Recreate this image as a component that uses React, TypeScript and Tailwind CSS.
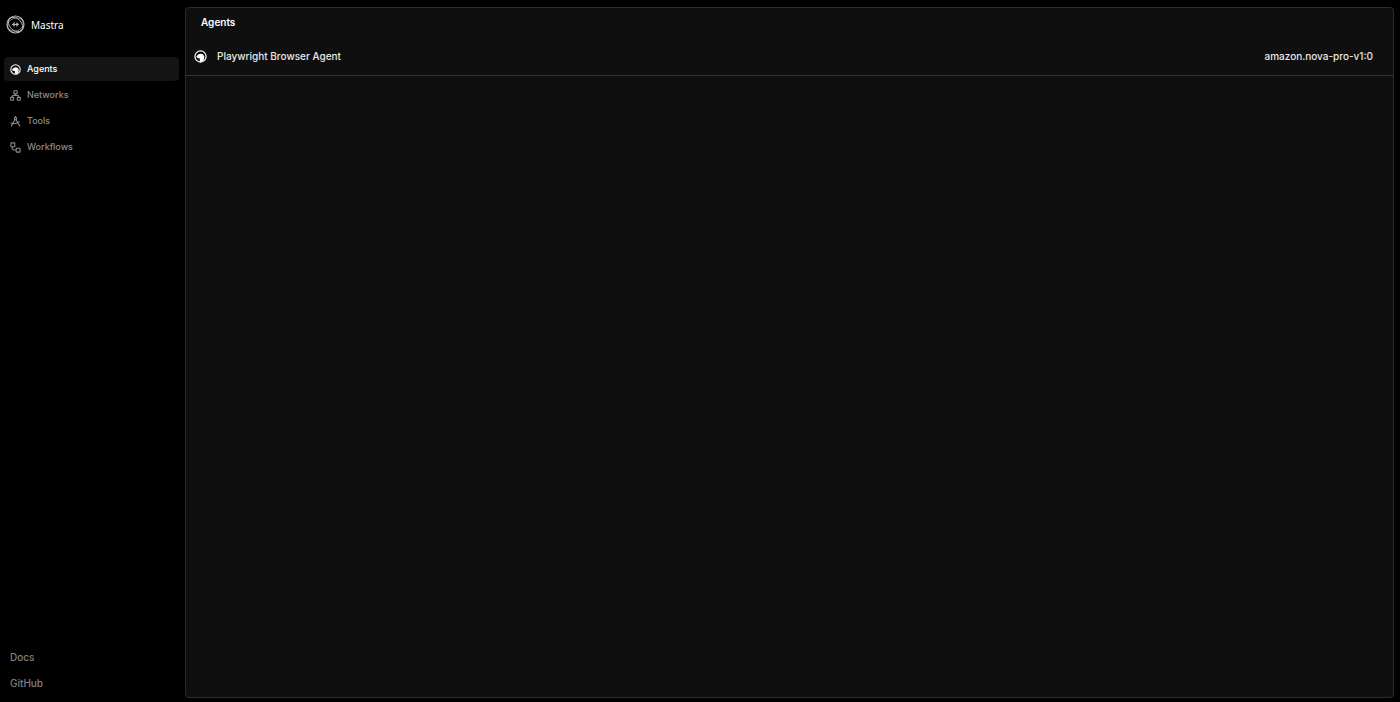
import type { ReactNode } from "react";

const AgentIcon = ({ className }: { className?: string }) => (
  <svg viewBox="0 0 24 24" fill="none" className={className} aria-hidden="true">
    <circle cx="12" cy="12" r="10.3" stroke="currentColor" strokeWidth="2.2" />
    <path
      d="M4 13 7.5 8.5 12 7l4.500 1L19 12l-.5 5-2.500 4-4.500 1-1-3.500.5-3L8 15Z"
      fill="currentColor"
    />
  </svg>
);

const NetworkIcon = ({ className }: { className?: string }) => (
  <svg viewBox="0 0 24 24" fill="none" stroke="currentColor" strokeWidth="2.4" className={className} aria-hidden="true">
    <rect x="8.5" y="1.5" width="7" height="7" rx="1" />
    <rect x="1.5" y="16" width="6.5" height="6.5" rx="1" />
    <rect x="16" y="16" width="6.5" height="6.5" rx="1" />
    <path d="M12 8.5V12M4.8 16v-2.5L6.5 12h11l1.700 1.500V16" />
  </svg>
);

const ToolsIcon = ({ className }: { className?: string }) => (
  <svg viewBox="0 0 24 24" fill="none" stroke="currentColor" strokeWidth="2.4" strokeLinecap="round" className={className} aria-hidden="true">
    <circle cx="12" cy="5.5" r="2.5" />
    <path d="M12 1v2M10.8 8 3 21.5M13.2 8 21 21.5M2 15.5c6 2.5 12 1.5 18-3" />
  </svg>
);

const WorkflowIcon = ({ className }: { className?: string }) => (
  <svg viewBox="0 0 24 24" fill="none" stroke="currentColor" strokeWidth="2.4" className={className} aria-hidden="true">
    <rect x="2" y="2" width="8.5" height="8.5" rx="1" />
    <rect x="13.5" y="13.5" width="8.5" height="8.5" rx="1" />
    <path d="M5 10.5V15l2.5 2.5h6" />
  </svg>
);

const MastraLogo = ({ className }: { className?: string }) => (
  <svg viewBox="0 0 34 34" fill="none" stroke="currentColor" className={className} aria-hidden="true">
    <circle cx="17" cy="17" r="15.2" strokeWidth="2" />
    <ellipse cx="17" cy="17" rx="15" ry="10.5" strokeWidth="1.6" transform="rotate(45 17 17)" />
    <ellipse cx="17" cy="17" rx="14.5" ry="11.5" strokeWidth="1.2" transform="rotate(-20 17 17)" />
    <path d="M11 17h12M14.5 13.5v7M19.5 13.5v7M12.5 15l2 4M21.5 15l-2 4" strokeWidth="2" />
  </svg>
);

type NavItem = {
  label: string;
  href: string;
  icon: ReactNode;
  active?: boolean;
};

const navItems: NavItem[] = [
  { label: "Agents", href: "#agents", icon: <AgentIcon className="size-[11px]" />, active: true },
  { label: "Networks", href: "#networks", icon: <NetworkIcon className="size-[11px]" /> },
  { label: "Tools", href: "#tools", icon: <ToolsIcon className="size-[11px]" /> },
  { label: "Workflows", href: "#workflows", icon: <WorkflowIcon className="size-[11px]" /> },
];

const footerLinks = [
  { label: "Docs", href: "#docs" },
  { label: "GitHub", href: "#github" },
];

const agents = [{ name: "Playwright Browser Agent", model: "amazon.nova-pro-v1:0" }];

const Sidebar = () => (
  <aside className="flex w-[185px] shrink-0 flex-col pt-[15px] pr-1.5 pb-[7px] pl-1">
    <a href="#home" className="flex items-center gap-1.5 pl-0.5 text-white">
      <MastraLogo className="size-[19px] text-[#b8b8b8]" />
      <span className="font-['Noto_Sans',sans-serif] text-[10px] leading-4">Mastra</span>
    </a>

    <nav className="mt-[23px] flex flex-col gap-0.5">
      {navItems.map((item) => (
        <a
          key={item.label}
          href={item.href}
          className={`flex h-6 items-center gap-1.5 rounded px-1.5 text-[9px] font-medium ${
            item.active ? "bg-[#141414] text-white" : "text-[#8c8c8c] hover:text-white"
          }`}
        >
          {item.icon}
          {item.label}
        </a>
      ))}
    </nav>

    <div className="mt-auto flex flex-col gap-0.5">
      {footerLinks.map((link) => (
        <a
          key={link.label}
          href={link.href}
          className="flex h-6 items-center px-1.5 text-[10px] font-medium text-[#808080] hover:text-white"
        >
          {link.label}
        </a>
      ))}
    </div>
  </aside>
);

const App = () => {
  return (
    <div className="flex min-h-screen bg-black font-[Inter,sans-serif] text-white">
      <Sidebar />

      <main className="mt-[7px] mr-1.5 mb-1 min-w-0 flex-1 rounded border border-[#2c2c2c] bg-[#0f0f0f]">
        <h1 className="flex h-[29px] items-center px-[15px] text-[10px] font-semibold">Agents</h1>

        <table className="w-full text-[10px] text-[#e8e8e8]">
          <tbody>
            {agents.map((agent) => (
              <tr key={agent.name} className="h-[38px] border-b border-[#343434]">
                <td className="pt-0.5 pl-2">
                  <a href="#agent" className="flex items-center gap-2.5 font-medium">
                    <AgentIcon className="size-[13px] text-white" />
                    {agent.name}
                  </a>
                </td>
                <td className="pt-0.5 pr-5 text-right font-medium">{agent.model}</td>
              </tr>
            ))}
          </tbody>
        </table>
      </main>
    </div>
  );
};

export default App;
